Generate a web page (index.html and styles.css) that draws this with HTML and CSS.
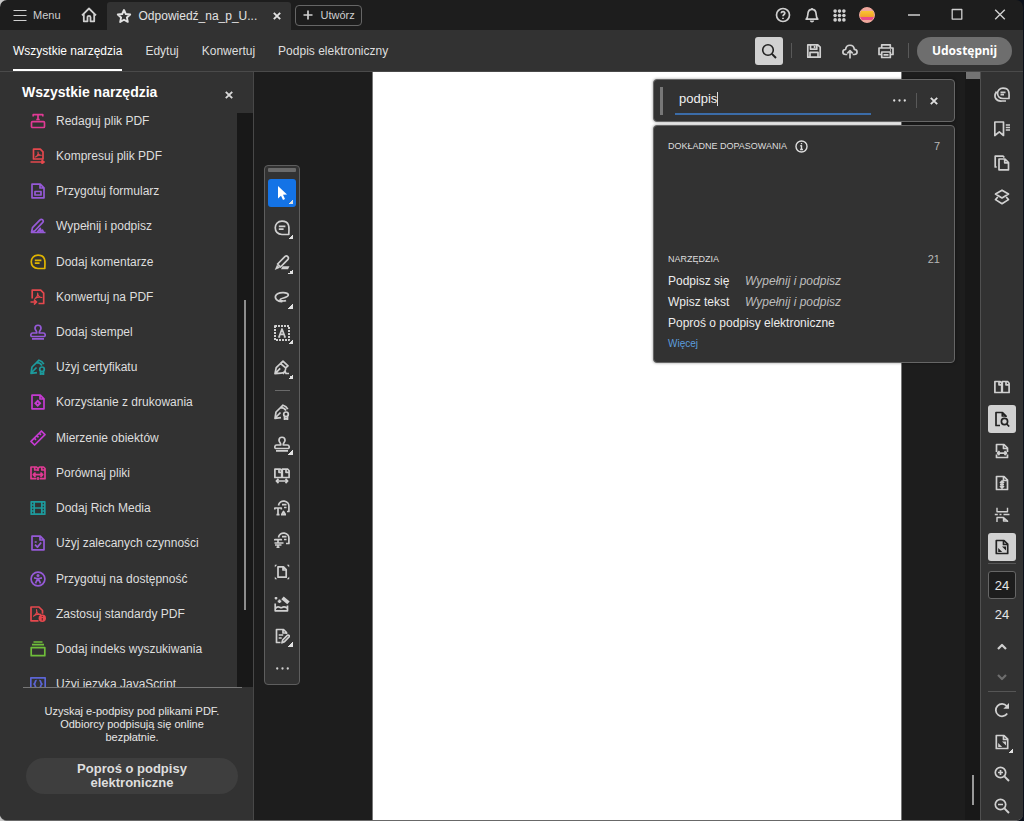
FILE: index.html
```html
<!DOCTYPE html>
<html lang="pl">
<head>
    <meta charset="UTF-8">
    <title>Odpowiedź_na_p_U...</title>
    <link rel="stylesheet" href="styles.css">
</head>
<body>
<svg class="sprite" aria-hidden="true">
    <symbol id="i-menu" viewBox="0 0 16 16"><path d="M1.5 3.5h13M1.5 8.5h13M1.5 13.5h13"/></symbol>
    <symbol id="i-home" viewBox="0 0 16 16"><path d="M1 8.3 8 1.5l7 6.8M2.8 7v7.3h3.7v-4a1.5 1.5 0 0 1 3 0v4h3.7V7" stroke-width="1.8"/></symbol>
    <symbol id="i-star" viewBox="0 0 16 16"><path d="m8 2 1.800 4 4.400.5-3.300 3 .9 4.400L8 11.700l-3.800 2.200.9-4.400-3.300-3L6.200 6z" stroke-width="1.900"/></symbol>
    <symbol id="i-close" viewBox="0 0 16 16"><path d="m4.800 4.800 6.400 6.400M11.200 4.800l-6.400 6.400" stroke-width="1.900"/></symbol>
    <symbol id="i-plus" viewBox="0 0 16 16"><path d="M8 3.500v9M3.500 8h9"/></symbol>
    <symbol id="i-help" viewBox="0 0 16 16"><circle cx="8" cy="8" r="6.500"/><path d="M6.200 6.300c.2-2.300 3.800-2 3.600 0C9.700 7.500 8 7.600 8 9.300M8 10.700v1.400"/></symbol>
    <symbol id="i-bell" viewBox="0 0 16 16"><path d="M2.200 12.200c1.600-1.500 1.500-3 1.700-5.500C4.100 4 5.600 2.300 8 2.300s3.900 1.700 4.100 4.400c.2 2.500.1 4 1.700 5.500zM8 1v1.300M6.500 13.500c.5 1.500 2.500 1.500 3 0"/></symbol>
    <symbol id="i-apps" viewBox="0 0 16 16"><g class="fill"><circle cx="2.600" cy="2.600" r="2.200"/><circle cx="8" cy="2.600" r="2.200"/><circle cx="13.400" cy="2.600" r="2.200"/><circle cx="2.600" cy="8" r="2.200"/><circle cx="8" cy="8" r="2.200"/><circle cx="13.400" cy="8" r="2.200"/><circle cx="2.600" cy="13.400" r="2.200"/><circle cx="8" cy="13.400" r="2.200"/><circle cx="13.400" cy="13.400" r="2.200"/></g></symbol>
    <symbol id="i-min" viewBox="0 0 16 16"><path d="M2 8h12"/></symbol>
    <symbol id="i-max" viewBox="0 0 16 16"><path d="M3.200 2.500h9.600v9.600H3.200z" stroke-width="1.300"/></symbol>
    <symbol id="i-exit" viewBox="0 0 16 16"><path d="m3.200 2.700 9.600 9.600M12.800 2.700l-9.600 9.600" stroke-width="1.400"/></symbol>
    <symbol id="i-search" viewBox="0 0 16 16"><circle cx="7" cy="7" r="5.300" stroke-width="1.600"/><path d="m10.900 10.900 4.100 4.100" stroke-width="2"/></symbol>
    <symbol id="i-save" viewBox="0 0 16 16"><path d="M1.800 1.800h10l2.400 2.400v10H1.800zM4.500 1.800v4.400h6.300V1.800M8.600 3v2M4 14V9.300h8V14"/></symbol>
    <symbol id="i-cloud" viewBox="0 0 16 16"><path d="M5.300 11.500H3.700C-.2 11.400.1 6.500 3.600 6.500 4.200.8 11.800.9 12.300 6.400c3.700.3 3.700 5.100-.1 5.100h-1.500M8 15.500V8M5.300 10.400 8 7.700l2.700 2.700"/></symbol>
    <symbol id="i-print" viewBox="0 0 16 16"><path d="M3.700 5V1.800h8.600V5M3.700 11.500H1V5h14v6.500h-2.700M3.700 9h8.600v5.500H3.700zM5.500 11.800h5M12 7h1"/></symbol>
    <symbol id="i-edit" viewBox="0 0 16 16"><path d="M3.200 3.500V1.700h9.600v1.800M8 1.700v4.500M6.300 6.500h3.400"/><rect x="1.500" y="8.700" width="13" height="5.800" rx="1"/></symbol>
    <symbol id="i-compress" viewBox="0 0 16 16"><path d="M3.500 11V1.200h6.800l2.700 2.700V11zM.5 14H14M11.500 12.200l2.500 1.800-2.500 1.800"/><path d="M5.500 9C7 8.300 8.700 5.800 8 4c-.5 2 1.500 3.500 3.300 3.300C9.500 7 7 7.500 5.500 9z" stroke-width="1.100"/></symbol>
    <symbol id="i-form" viewBox="0 0 16 16"><path d="M2 1.200h8.300L14 4.900v9.900H2zM10 1.500V5h3.800M5 8.500h6v3.500H5z"/></symbol>
    <symbol id="i-sign" viewBox="0 0 16 16"><path d="m1.500 14.300 1-4.600 7.300-7.500c2-2 4.600.4 2.700 2.500l-7.400 7.800zM1.500 14.500h14M7.500 14l2.600-3.600c1.200.5-1 3.300.6 2.800l1.800-1.100.8 1.900"/></symbol>
    <symbol id="i-comment" viewBox="0 0 16 16"><path d="M8 1.200c9 0 6.700 8.500 6.800 13.300H8C-1 14.500-1 1.200 8 1.200zM4.800 6.400h6.600M4.800 9.200h4.800"/></symbol>
    <symbol id="i-convert" viewBox="0 0 16 16"><path d="M2.200 9.500V1.200h8.500l3 3v10.300H8.500M.5 13h5.800M4 10.600 6.500 13 4 15.500"/><path d="M5 9.600C7 8 8.200 6.200 7.700 4c-.2 2.400 1.800 4.500 4.200 4.500C9.500 7.800 7 8.200 5 9.600z" stroke-width="1.100"/></symbol>
    <symbol id="i-stamp" viewBox="0 0 16 16"><path d="M6.700 9c.4-2-1.700-2.700-1.700-4.700 0-4.100 6-4.100 6 0C11 6.300 8.900 7 9.300 9h4c2.500 0 2.200 3.500 1 3.500H1.700C.5 12.500.2 9 2.700 9zM2 14.800h12"/></symbol>
    <symbol id="i-cert" viewBox="0 0 16 16"><path d="M6.500 3.700 2 8 1 14.300l6-.6M6.500 3.700 9 1.200c2 .5 3.800 2 4.800 4M6.500 3.700c2.300 0 4.300 1 5.500 2.700M1.200 14 6.500 8.500"/><circle cx="12" cy="10.300" r="2.300"/><path d="M10.500 12.300v3.200l1.500-.9 1.500.9v-3.200"/></symbol>
    <symbol id="i-printprod" viewBox="0 0 16 16"><path d="M2 1.200h8.300L14 4.900v9.900H2zM10 1.500V5h3.800"/><path class="fill" d="M7.700 5.500 11.400 9.200l-3.700 3.700L4 9.200z"/><circle cx="7.700" cy="9.200" r=".8" fill="#323232" stroke="none"/></symbol>
    <symbol id="i-ruler" viewBox="0 0 16 16"><path d="M1 11.400 11.400 1 15 4.600 4.600 15zM4.300 8.200l1.700 1.700M6.800 5.700l1.700 1.700M9.300 3.200 11 4.900"/></symbol>
    <symbol id="i-compare" viewBox="0 0 16 16"><path d="M6.500 13.700H1V2h5.500l1.500 1.500L9.500 2h4L15 3.500v10.200H9.500M8 3.500V6M4.700 2v3h3M11.800 2v3h2.900M3.500 9.700h9M5.500 7.500 3.300 9.700l2.200 2.200M10.500 7.500l2.200 2.200-2.200 2.200M8 12v3"/></symbol>
    <symbol id="i-film" viewBox="0 0 16 16"><path d="M1.200 1.800h13.600v12.400H1.200zM4.200 2v12M11.800 2v12M4.500 8h7M1.200 5h3M1.200 8h3M1.200 11h3M11.800 5h3M11.800 8h3M11.800 11h3"/></symbol>
    <symbol id="i-action" viewBox="0 0 16 16"><path d="M2 1.200h8.300L14 4.900v9.900H2zM10 1.500V5h3.800M4.700 7h2M5 9.700l2.400 2.400 3.800-4.600"/></symbol>
    <symbol id="i-access" viewBox="0 0 16 16"><circle cx="8" cy="8" r="6.900"/><circle class="fill" cx="8" cy="4.500" r="1.500"/><path d="m4 6.900 2.700.6h2.600l2.700-.6M5.500 12.400l1.300-3h2.400l1.300 3M7.300 7.500v2M8.700 7.500v2"/></symbol>
    <symbol id="i-standard" viewBox="0 0 16 16"><path d="M8.500 14.800H1V1h8l3.500 3.500v3.300"/><path d="M3.500 10.200C6 8.500 7.500 6 6.500 3.600c-.2 2.600 1.500 5 4.200 4.800C8 7.900 5.500 8.500 3.500 10.200z" stroke-width="1.100"/><circle class="fill" cx="12.300" cy="12.200" r="3.700"/><path d="M12.300 10v1M12.300 12v2.500" stroke="#74262b" stroke-width="1.200"/></symbol>
    <symbol id="i-index" viewBox="0 0 16 16"><path d="M3.500 1h9M2 3.700h12M1.200 6.700h13.600v8H1.200z"/></symbol>
    <symbol id="i-js" viewBox="0 0 16 16"><path d="M.8 1.800h14.400v12.700H.8zM6.700 4.500C4.300 4.300 6 7.500 4 8c2 .5.300 3.700 2.700 3.500M9.300 4.500c2.400-.2.700 3 2.700 3.500-2 .5-.3 3.700-2.700 3.500"/></symbol>
    <symbol id="i-cursor" viewBox="0 0 16 16"><path d="m4 1 9 8.500-4 .2 2 4.200-2 1-2-4.200-3 2.800z" fill="#fff" stroke="none"/></symbol>
    <symbol id="i-marker" viewBox="0 0 16 16"><path d="m3.600 9 7.500-7.600c1.900-1.300 4.200.9 2.900 2.900L6.500 12z"/><path class="fill" d="m3 9.700 3 3L.7 15zM7 14.200l1.600-3H15.500l-1.500 3z"/></symbol>
    <symbol id="i-lasso" viewBox="0 0 16 16"><path d="M12 10.500c-1.500.8-6 .6-5.800-1C6.600 7.800 15 8 14.300 4.800 13.500 1.500 3.700 2 1.800 5.500c-1.600 3.200 2 6.500 6.700 6" stroke-width="1.700"/></symbol>
    <symbol id="i-textbox" viewBox="0 0 16 16"><path d="M1 1h14v14H1z" stroke-dasharray="2 1" stroke-width="2"/><path d="m5 12 3-8 3 8M6 9.300h4M4.200 12h2M9.800 12h2"/></symbol>
    <symbol id="i-pen" viewBox="0 0 16 16"><path d="M6.500 3.500 2.200 7.700 1 13.600l6-.5c2.900-.2 4.900-2.600 4.700-5.500M6.500 3.500l5.200 4.300M6.500 3.500 9 1.200l5 4.600-2.300 2M1.300 13.300l4.900-5M9 14l2-3 1 2.500h3" stroke-width="1.700"/></symbol>
    <symbol id="i-diff" viewBox="0 0 16 16"><path d="M7.700 9.500H.9V1.200h5.500l1.300 1.500zm.6 0h6.800V2.700l-1.300-1.500H8.300zM5 1.500v2.800h2.500M12 1.500v2.800h3M2.500 13h11M4.500 10.800 2.300 13l2.200 2.200M11.500 10.800l2.200 2.200-2.200 2.200"/></symbol>
    <symbol id="i-notetext" viewBox="0 0 16 16"><path d="M4.500 5.500C5.500-1 15.500-.2 14.900 7v4.500H13M8 4.700h4.500M10 7.500h2.500M.8 9.500V8h6.500v1.500M4 8v6.500M2.500 14.700h3M7 14.700h5M8 14l1.500-2.500 1.700 2.700"/></symbol>
    <symbol id="i-noteline" viewBox="0 0 16 16"><path d="M4.500 5.500C5.500-1 15.500-.2 14.900 7v4.500H12M8 4.700h4.500M10 7.500h2.500M.8 8.500V7.700h6.500v.8M4 7.700v3.500M.5 11h9M1 13h6.500M4 13v2.300M2.500 15.300h3"/></symbol>
    <symbol id="i-crop" viewBox="0 0 16 16"><path d="M4 2.800h5.500l2.700 2.700v7.700H4zM9 3v3h3"/><path d="M.8 3.200.8.800h2.400zM12.800.8h2.400v2.400zM.8 12.800v2.400h2.400zM12.800 15.200h2.400v-2.400z" class="fill"/></symbol>
    <symbol id="i-enhance" viewBox="0 0 16 16"><path d="M5.500 3.500v3.600M3.700 5.300h3.600M2 1v2.500M.7 2.200h2.600M1.200 7.500v7.300h12.300V9.500M1.500 12.500c3-4 4.500.5 6.500-1s3.500-.5 5 .5"/><path d="m8.500 1.800 6 5" stroke-width="3.700"/></symbol>
    <symbol id="i-docedit" viewBox="0 0 16 16"><path d="M6.500 14.500h-4v-13h7l3 3V6M9 1.700V5h3.200M4.700 7h4.500M4.700 10h3M8 14.800l.7-2.800 4.600-4.700c1.200-.8 2.500.4 1.700 1.700l-4.500 4.700z"/></symbol>
    <symbol id="i-dots" viewBox="0 0 16 16"><g class="fill"><circle cx="1.500" cy="8" r="1.400"/><circle cx="8" cy="8" r="1.400"/><circle cx="14.500" cy="8" r="1.400"/></g></symbol>
    <symbol id="i-info" viewBox="0 0 16 16"><circle cx="8" cy="8" r="6.800"/><path d="M6.500 7H8v4.500M6.300 11.700h3.500M8 3.800v1.500"/></symbol>
    <symbol id="i-chats" viewBox="0 0 16 16"><path d="M9 1.200c7.500 0 6 6.500 6 10.300H9C1.700 11.500 1.700 1.200 9 1.200zM6.500 5.300h5M6.500 7.700h3.500M2.500 4.500C-1 10 2 14.500 8 14h4"/></symbol>
    <symbol id="i-bookmark" viewBox="0 0 16 16"><path d="M.8 1h8.700v13.500L5.300 10.800.8 14.500z"/><path d="M11.800 4H16M11.800 6.500H16M11.800 9H16" stroke-width="1.300"/></symbol>
    <symbol id="i-pages" viewBox="0 0 16 16"><path d="M5 4h6l3.500 3.500v7.300H5zM10.700 4.300v3.500h3.500M2.700 12H1.200V1.200H9l1.400 1.300"/></symbol>
    <symbol id="i-layers" viewBox="0 0 16 16"><path d="m8 1.200 6.500 3.900L8 9 1.500 5.100zM3.800 8 1.500 10.600 8 14.700l6.500-4.100L12.200 8"/></symbol>
    <symbol id="i-twopage" viewBox="0 0 16 16"><path d="M7.700 13.500H.9V2.500h5.300l1.500 1.700zm.6 0h6.800V4.200l-1.500-1.700H8.300zM5 2.800v3h2.500M12 2.800v3h3"/></symbol>
    <symbol id="i-pagefind" viewBox="0 0 16 16"><path d="M6 14.500H2v-13h6.500L12 5v1M8.300 1.700V5h3.500M12.800 13l2.400 2.500"/><circle cx="10.500" cy="10.500" r="3.100"/></symbol>
    <symbol id="i-fitwidth" viewBox="0 0 16 16"><path d="M2.500 9V1.500H10l3.500 3.500v4M2.500 11.500v3h11v-3M9.500 1.700v3.800h4M3 10.200h10M5.500 8.200l-2 2 2 2M10.500 8.200l2 2-2 2"/></symbol>
    <symbol id="i-fitheight" viewBox="0 0 16 16"><path d="M2.500 1.500H10l3.500 3.500v9.500h-11zM9.500 1.700v3.800h4M8 6v7M6 8l2-2 2 2M6 11l2 2 2-2M6 9.500h4"/></symbol>
    <symbol id="i-scroll" viewBox="0 0 16 16"><path d="M3 .8v4h10.500v-4M.8 7.500h3M5.500 7.500h2M9.500 7.500h6M3 15v-4.500h6.500l4 3.500v1M9.500 10.500V14h4" stroke-width="1.400"/></symbol>
    <symbol id="i-fitpage" viewBox="0 0 16 16"><path d="M2.300 1.500H10l3.700 3.700v9.300H2.300zM9.500 1.700v3.800h4"/><path class="fill" d="M8 7.500h4v4zM8.200 13h-4V9z"/></symbol>
    <symbol id="i-up" viewBox="0 0 16 16"><path d="m4 10 4-4 4 4" stroke-width="2.200"/></symbol>
    <symbol id="i-down" viewBox="0 0 16 16"><path d="m4 6 4 4 4-4" stroke-width="2.200"/></symbol>
    <symbol id="i-rotate" viewBox="0 0 16 16"><path d="M13.200 11.500A6.200 6.200 0 1 1 12.700 4" stroke-width="1.800"/><path class="fill" d="M15 1v5.700H9.300z"/></symbol>
    <symbol id="i-zoomin" viewBox="0 0 16 16"><circle cx="6.500" cy="6.500" r="5.200"/><path d="m10.400 10.400 4.600 4.600" stroke-width="2"/><path d="M6.500 4v5M4 6.500h5"/></symbol>
    <symbol id="i-zoomout" viewBox="0 0 16 16"><circle cx="6.500" cy="6.500" r="5.200"/><path d="m10.400 10.400 4.600 4.600" stroke-width="2"/><path d="M4 6.500h5"/></symbol>
</svg>

<div class="window">
    <header class="titlebar">
        <button type="button" class="menu-btn"><svg class="icon thin"><use href="#i-menu"/></svg>Menu</button>
        <button type="button" class="home-btn" aria-label="Strona główna"><svg class="icon"><use href="#i-home"/></svg></button>
        <div class="tab">
            <svg class="icon"><use href="#i-star"/></svg>
            <span class="tab-name">Odpowiedź_na_p_U...</span>
            <button type="button" aria-label="Zamknij kartę"><svg class="icon"><use href="#i-close"/></svg></button>
        </div>
        <button type="button" class="create-btn"><svg class="icon"><use href="#i-plus"/></svg>Utwórz</button>
        <div class="account">
            <button type="button" aria-label="Pomoc"><svg class="icon"><use href="#i-help"/></svg></button>
            <button type="button" aria-label="Powiadomienia"><svg class="icon"><use href="#i-bell"/></svg></button>
            <button type="button" aria-label="Aplikacje"><svg class="icon small"><use href="#i-apps"/></svg></button>
            <button type="button" class="avatar" aria-label="Konto"></button>
        </div>
        <div class="window-controls">
            <button type="button" aria-label="Minimalizuj"><svg class="icon"><use href="#i-min"/></svg></button>
            <button type="button" aria-label="Maksymalizuj"><svg class="icon"><use href="#i-max"/></svg></button>
            <button type="button" aria-label="Zamknij"><svg class="icon"><use href="#i-exit"/></svg></button>
        </div>
    </header>

    <div class="toolbar">
        <nav class="modes">
            <a href="#" class="active">Wszystkie narzędzia</a>
            <a href="#">Edytuj</a>
            <a href="#">Konwertuj</a>
            <a href="#">Podpis elektroniczny</a>
        </nav>
        <div class="file-actions">
            <button type="button" class="tool selected" aria-label="Znajdź"><svg class="icon"><use href="#i-search"/></svg></button>
            <span class="vline"></span>
            <button type="button" class="tool" aria-label="Zapisz"><svg class="icon"><use href="#i-save"/></svg></button>
            <button type="button" class="tool" aria-label="Wyślij do chmury"><svg class="icon"><use href="#i-cloud"/></svg></button>
            <button type="button" class="tool" aria-label="Drukuj"><svg class="icon"><use href="#i-print"/></svg></button>
            <span class="vline"></span>
            <button type="button" class="share-btn">Udostępnij</button>
        </div>
    </div>

    <div class="workspace">
        <aside class="panel">
            <div class="panel-head">
                <h2>Wszystkie narzędzia</h2>
                <button type="button" aria-label="Zamknij panel"><svg class="icon"><use href="#i-close"/></svg></button>
            </div>
            <div class="panel-body">
                <ul class="tools">
                    <li><a href="#"><svg class="icon pink"><use href="#i-edit"/></svg>Redaguj plik PDF</a></li>
                    <li><a href="#"><svg class="icon red"><use href="#i-compress"/></svg>Kompresuj plik PDF</a></li>
                    <li><a href="#"><svg class="icon violet"><use href="#i-form"/></svg>Przygotuj formularz</a></li>
                    <li><a href="#"><svg class="icon violet"><use href="#i-sign"/></svg>Wypełnij i podpisz</a></li>
                    <li><a href="#"><svg class="icon yellow"><use href="#i-comment"/></svg>Dodaj komentarze</a></li>
                    <li><a href="#"><svg class="icon red"><use href="#i-convert"/></svg>Konwertuj na PDF</a></li>
                    <li><a href="#"><svg class="icon violet"><use href="#i-stamp"/></svg>Dodaj stempel</a></li>
                    <li><a href="#"><svg class="icon teal"><use href="#i-cert"/></svg>Użyj certyfikatu</a></li>
                    <li><a href="#"><svg class="icon magenta"><use href="#i-printprod"/></svg>Korzystanie z drukowania</a></li>
                    <li><a href="#"><svg class="icon magenta"><use href="#i-ruler"/></svg>Mierzenie obiektów</a></li>
                    <li><a href="#"><svg class="icon pink"><use href="#i-compare"/></svg>Porównaj pliki</a></li>
                    <li><a href="#"><svg class="icon teal"><use href="#i-film"/></svg>Dodaj Rich Media</a></li>
                    <li><a href="#"><svg class="icon violet"><use href="#i-action"/></svg>Użyj zalecanych czynności</a></li>
                    <li><a href="#"><svg class="icon violet"><use href="#i-access"/></svg>Przygotuj na dostępność</a></li>
                    <li><a href="#"><svg class="icon red"><use href="#i-standard"/></svg>Zastosuj standardy PDF</a></li>
                    <li><a href="#"><svg class="icon green"><use href="#i-index"/></svg>Dodaj indeks wyszukiwania</a></li>
                    <li><a href="#"><svg class="icon indigo"><use href="#i-js"/></svg>Użyj języka JavaScript</a></li>
                </ul>
                <div class="track"><div class="thumb"></div></div>
            </div>
            <div class="promo">
                <p>Uzyskaj e-podpisy pod plikami PDF. Odbiorcy podpisują się online bezpłatnie.</p>
                <button type="button">Poproś o podpisy elektroniczne</button>
            </div>
        </aside>

        <main class="document">
            <div class="page"></div>

            <div class="quick-tools">
                <div class="grip"></div>
                <div class="group wide">
                    <button type="button" class="tool blue more" aria-label="Zaznacz"><svg class="icon"><use href="#i-cursor"/></svg></button>
                    <button type="button" class="tool more" aria-label="Komentarz"><svg class="icon"><use href="#i-comment"/></svg></button>
                    <button type="button" class="tool more" aria-label="Wyróżnij"><svg class="icon"><use href="#i-marker"/></svg></button>
                    <button type="button" class="tool more" aria-label="Rysuj"><svg class="icon"><use href="#i-lasso"/></svg></button>
                    <button type="button" class="tool more" aria-label="Pole tekstowe"><svg class="icon"><use href="#i-textbox"/></svg></button>
                    <button type="button" class="tool more" aria-label="Podpis"><svg class="icon"><use href="#i-pen"/></svg></button>
                </div>
                <div class="divider"></div>
                <div class="group">
                    <button type="button" class="tool" aria-label="Certyfikat"><svg class="icon"><use href="#i-cert"/></svg></button>
                    <button type="button" class="tool more" aria-label="Stempel"><svg class="icon"><use href="#i-stamp"/></svg></button>
                    <button type="button" class="tool" aria-label="Porównaj"><svg class="icon"><use href="#i-diff"/></svg></button>
                    <button type="button" class="tool" aria-label="Zamień tekst"><svg class="icon"><use href="#i-notetext"/></svg></button>
                    <button type="button" class="tool" aria-label="Przekreśl tekst"><svg class="icon"><use href="#i-noteline"/></svg></button>
                    <button type="button" class="tool" aria-label="Przytnij"><svg class="icon"><use href="#i-crop"/></svg></button>
                    <button type="button" class="tool" aria-label="Popraw skan"><svg class="icon"><use href="#i-enhance"/></svg></button>
                    <button type="button" class="tool more" aria-label="Edytuj stronę"><svg class="icon"><use href="#i-docedit"/></svg></button>
                    <button type="button" class="tool" aria-label="Więcej narzędzi"><svg class="icon small"><use href="#i-dots"/></svg></button>
                </div>
            </div>

            <div class="find">
                <div class="find-bar">
                    <div class="find-grip"></div>
                    <label class="find-field">
                        <input type="text" value="podpis" aria-label="Znajdź tekst lub narzędzia">
                        <span class="caret"></span>
                    </label>
                    <button type="button" aria-label="Opcje"><svg class="icon small"><use href="#i-dots"/></svg></button>
                    <span class="vline"></span>
                    <button type="button" aria-label="Zamknij wyszukiwanie"><svg class="icon"><use href="#i-close"/></svg></button>
                </div>
                <div class="results">
                    <section class="matches">
                        <h3>Dokładne dopasowania <svg class="icon small"><use href="#i-info"/></svg><span class="count">7</span></h3>
                    </section>
                    <section>
                        <h3>Narzędzia<span class="count">21</span></h3>
                        <a href="#" class="hit"><span class="hit-name">Podpisz się</span><em>Wypełnij i podpisz</em></a>
                        <a href="#" class="hit"><span class="hit-name">Wpisz tekst</span><em>Wypełnij i podpisz</em></a>
                        <a href="#" class="hit">Poproś o podpisy elektroniczne</a>
                        <a href="#" class="more-link">Więcej</a>
                    </section>
                </div>
            </div>
        </main>

        <div class="doc-track">
            <div class="doc-cap"></div>
            <div class="doc-thumb"></div>
        </div>

        <aside class="rail">
            <div class="rail-group panes">
                <button type="button" class="tool" aria-label="Komentarze"><svg class="icon"><use href="#i-chats"/></svg></button>
                <button type="button" class="tool" aria-label="Zakładki"><svg class="icon"><use href="#i-bookmark"/></svg></button>
                <button type="button" class="tool" aria-label="Strony"><svg class="icon"><use href="#i-pages"/></svg></button>
                <button type="button" class="tool" aria-label="Warstwy"><svg class="icon"><use href="#i-layers"/></svg></button>
            </div>
            <div class="rail-group">
                <button type="button" class="tool" aria-label="Dwie strony"><svg class="icon"><use href="#i-twopage"/></svg></button>
                <button type="button" class="tool selected" aria-label="Podgląd strony"><svg class="icon"><use href="#i-pagefind"/></svg></button>
                <button type="button" class="tool" aria-label="Dopasuj szerokość"><svg class="icon"><use href="#i-fitwidth"/></svg></button>
                <button type="button" class="tool" aria-label="Dopasuj wysokość"><svg class="icon"><use href="#i-fitheight"/></svg></button>
                <button type="button" class="tool" aria-label="Przewijanie"><svg class="icon"><use href="#i-scroll"/></svg></button>
                <button type="button" class="tool selected" aria-label="Cała strona"><svg class="icon"><use href="#i-fitpage"/></svg></button>
            </div>
            <div class="rail-group paging">
                <input type="text" class="page-input" value="24" aria-label="Numer strony">
                <span class="page-total">24</span>
                <button type="button" class="tool" aria-label="Poprzednia strona"><svg class="icon"><use href="#i-up"/></svg></button>
                <button type="button" class="tool dim" aria-label="Następna strona"><svg class="icon"><use href="#i-down"/></svg></button>
            </div>
            <div class="rail-group zooming">
                <button type="button" class="tool" aria-label="Obróć"><svg class="icon"><use href="#i-rotate"/></svg></button>
                <button type="button" class="tool more" aria-label="Widok strony"><svg class="icon"><use href="#i-fitpage"/></svg></button>
                <button type="button" class="tool" aria-label="Powiększ"><svg class="icon"><use href="#i-zoomin"/></svg></button>
                <button type="button" class="tool" aria-label="Pomniejsz"><svg class="icon"><use href="#i-zoomout"/></svg></button>
            </div>
        </aside>
    </div>
</div>
</body>
</html>
```
FILE: styles.css
```css
* {
    box-sizing: border-box;
}
body {
    margin: 0;
    background: linear-gradient(90deg, #c8c8c8 10px, #0b101a 10px);
    font-family: "Liberation Sans", Arial, sans-serif;
    font-size: 12px;
    color: #dedede;
}
button, input {
    font: inherit;
    color: inherit;
    background: none;
    border: none;
    padding: 0;
    margin: 0;
}
button {
    display: flex;
    align-items: center;
    justify-content: center;
}
a {
    color: inherit;
    text-decoration: none;
}
h2, h3, p, ul {
    margin: 0;
    padding: 0;
}
.sprite {
    display: none;
}
.icon {
    width: 16px;
    height: 16px;
    flex: none;
    fill: none;
    stroke: currentColor;
    stroke-width: 1.7;
    stroke-linejoin: round;
    overflow: visible;
}
.icon.thin {
    stroke-width: 1.2;
}
.icon.small {
    width: 13px;
    height: 13px;
}
.fill {
    fill: currentColor;
    stroke: none;
}
.window {
    display: flex;
    flex-direction: column;
    height: 100vh;
    margin-right: 1px;
    background: #1d1d1d;
    border-bottom: 1px solid #686868;
    border-radius: 7px;
    overflow: hidden;
}

/* title bar */
.titlebar {
    display: flex;
    align-items: center;
    height: 30px;
    padding-left: 12px;
    color: #cfcfcf;
}
.menu-btn {
    gap: 5px;
    font-size: 11px;
}
.home-btn {
    margin: 0 10px 0 20px;
}
.tab {
    display: flex;
    align-items: center;
    align-self: flex-end;
    width: 184px;
    height: 28px;
    padding: 0 6px 0 9px;
    background: #323232;
    border-radius: 3px 3px 0 0;
    color: #e2e2e2;
}
.tab-name {
    flex: 1;
    margin-left: 7px;
}
.create-btn {
    gap: 5px;
    height: 21px;
    margin-left: 4px;
    padding: 0 6px 0 4px;
    border: 1px solid #666;
    border-radius: 4px;
    font-size: 11px;
}
.account {
    display: flex;
    align-items: center;
    gap: 13px;
    margin-left: auto;
}
.avatar {
    width: 16px;
    height: 16px;
    border-radius: 50%;
    background: linear-gradient(#f0a79c 20%, #f8c833 20%, #f3a12a 62%, #ea4c89 62%, #ea4c89 85%, #f0a79c 85%);
    border: 1px solid #f0a79c;
}
.window-controls {
    display: flex;
    gap: 27px;
    margin: 0 15px 0 31px;
}

/* toolbar */
.toolbar {
    display: flex;
    justify-content: space-between;
    height: 42px;
    background: #323232;
    border-bottom: 1px solid #4a4a4a;
}
.modes {
    display: flex;
    gap: 23px;
    padding-left: 13px;
}
.modes a {
    display: flex;
    align-items: center;
    border-top: 2px solid transparent;
    border-bottom: 2px solid transparent;
}
.modes .active {
    color: #fff;
    border-bottom-color: #fff;
}
.file-actions {
    display: flex;
    align-items: center;
    gap: 8px;
    padding-right: 11px;
}
.vline {
    width: 1px;
    height: 15px;
    background: #595959;
}
.tool {
    width: 28px;
    height: 28px;
    border-radius: 3px;
    color: #d0d0d0;
}
.selected {
    background: #d1d1d1;
    color: #222;
}
.share-btn {
    height: 28px;
    padding: 0 15px;
    border-radius: 14px;
    background: #6e6e6e;
    color: #fff;
    font-family: "Noto Sans", sans-serif;
    font-weight: bold;
}

/* left panel */
.workspace {
    display: flex;
    flex: 1;
    min-height: 0;
}
.panel {
    display: flex;
    flex-direction: column;
    width: 254px;
    background: #323232;
    border-right: 1px solid #484848;
}
.panel-head {
    display: flex;
    align-items: center;
    justify-content: space-between;
    height: 41px;
    padding: 0 16px 0 22px;
    color: #d8d8d8;
}
.panel-head h2 {
    padding-bottom: 2px;
    font-size: 14px;
    color: #fff;
}
.panel-head button {
    padding-top: 4px;
}
.panel-body {
    display: flex;
    flex: 1;
    min-height: 0;
    overflow: hidden;
}
.tools {
    display: grid;
    grid-auto-rows: 1fr;
    flex: 1;
    min-height: 599px;
    margin-top: -10px;
    list-style: none;
}
.tools a {
    display: flex;
    align-items: center;
    gap: 10px;
    height: 100%;
    padding-left: 30px;
}
.track {
    flex: none;
    width: 16px;
    background: #181818;
    padding: 187px 0 77px 7px;
}
.thumb {
    width: 2px;
    height: 100%;
    background: #8c8c8c;
}
.pink { color: #e23a95; }
.red { color: #e5484d; }
.violet { color: #965ad8; }
.yellow { color: #e0b400; }
.teal { color: #1d9a9c; }
.magenta { color: #c53bd2; }
.green { color: #6fbe3a; }
.indigo { color: #5c66d6; }
.promo {
    padding: 18px 15px 26px 26px;
    background: linear-gradient(#777, #777) 23px 0 / 219px 1px no-repeat;
}
.promo p {
    padding: 0 16px;
    font-size: 11px;
    line-height: 13px;
    text-align: center;
    color: #e6e6e6;
}
.promo button {
    width: 100%;
    height: 36px;
    margin-top: 14px;
    padding: 0 40px;
    border-radius: 18px;
    background: #3e3e3e;
    font-size: 13px;
    font-weight: bold;
    line-height: 14px;
}

/* document area */
.document {
    position: relative;
    flex: 1;
    display: flex;
    padding: 0 63px 0 118px;
}
.page {
    flex: 1;
    background: #fff;
    border: 1px solid #777;
    border-width: 0 1px;
}
.quick-tools {
    position: absolute;
    left: 10px;
    top: 93px;
    width: 36px;
    padding: 2px;
    background: #323232;
    border: 1px solid #5e5e5e;
    border-radius: 4px;
    display: flex;
    flex-direction: column;
    align-items: center;
}
.grip {
    width: 28px;
    height: 4px;
    margin-bottom: 7px;
    border-radius: 1px;
    background: #6a6a6a;
}
.group {
    display: grid;
    gap: 4px;
}
.group.wide {
    gap: 7px;
}
.divider {
    width: 15px;
    height: 1px;
    margin: 8px 0 7px;
    background: #6a6a6a;
}
.blue {
    background: #1473e6;
}
.more {
    background-image: linear-gradient(135deg, transparent 50%, #e0e0e0 50%);
    background-size: 5px 5px;
    background-position: 20px 20px;
    background-repeat: no-repeat;
}
.find {
    position: absolute;
    right: 10px;
    top: 7px;
    width: 302px;
}
.find-bar, .results {
    background: #323232;
    border: 1px solid #666;
    border-radius: 4px;
    box-shadow: 0 0 3px #0006;
}
.find-bar {
    display: flex;
    align-items: center;
    height: 43px;
    padding: 0 12px 0 6px;
}
.find-grip {
    width: 3px;
    height: 28px;
    background: #777;
}
.find-field {
    display: flex;
    align-items: center;
    width: 196px;
    height: 29px;
    margin: 0 22px 0 12px;
    padding: 0 4px 2px;
    border-bottom: 2px solid #3b6ca8;
    font-size: 13px;
    color: #f0f0f0;
}
.find-field input {
    field-sizing: content;
    outline: none;
}
.caret {
    width: 1px;
    height: 14px;
    background: #ddd;
}
.find-bar .vline {
    margin: 0 9px 0 10px;
}
.results {
    margin-top: 3px;
    padding: 14px 14px 8px;
}
.matches {
    min-height: 113px;
}
.results h3 {
    display: flex;
    align-items: center;
    gap: 8px;
    height: 12px;
    font-size: 9px;
    font-weight: normal;
    text-transform: uppercase;
}
.count {
    margin-left: auto;
    font-size: 11px;
    color: #b8b8b8;
}
.results section + section h3 {
    margin-bottom: 5px;
}
.hit {
    display: flex;
    height: 21px;
    align-items: center;
    color: #ececec;
}
.hit-name {
    width: 77px;
}
.hit em {
    color: #bdbdbd;
}
.more-link {
    display: inline-block;
    line-height: 21px;
    font-size: 10px;
    color: #5c9ddd;
}
.doc-track {
    display: flex;
    flex-direction: column;
    justify-content: space-between;
    align-items: center;
    width: 15px;
    padding-bottom: 15px;
    background: #181818;
}
.doc-cap {
    width: 14px;
    height: 7px;
    background: #737373;
}
.doc-thumb {
    width: 2px;
    height: 30px;
    background: #999;
}

/* right rail */
.rail {
    display: flex;
    flex-direction: column;
    align-items: center;
    width: 43px;
    background: #323232;
    border-left: 1px solid #505050;
}
.rail-group {
    display: grid;
    gap: 4px;
}
.panes {
    gap: 6px;
    padding-top: 9px;
    margin-bottom: auto;
}
.paging {
    gap: 2px;
    margin-top: 2px;
    padding-top: 7px;
    border-top: 1px solid #555;
}
.page-input, .page-total {
    width: 28px;
    height: 28px;
    text-align: center;
    font-size: 13px;
    line-height: 28px;
    color: #e6e6e6;
}
.page-input {
    background: #1d1d1d;
    border: 1px solid #666;
    border-radius: 3px;
    line-height: 26px;
}
.page-total {
    height: 30px;
}
.dim {
    color: #6e6e6e;
}
.zooming {
    padding-top: 4px;
    border-top: 1px solid #555;
}
```
